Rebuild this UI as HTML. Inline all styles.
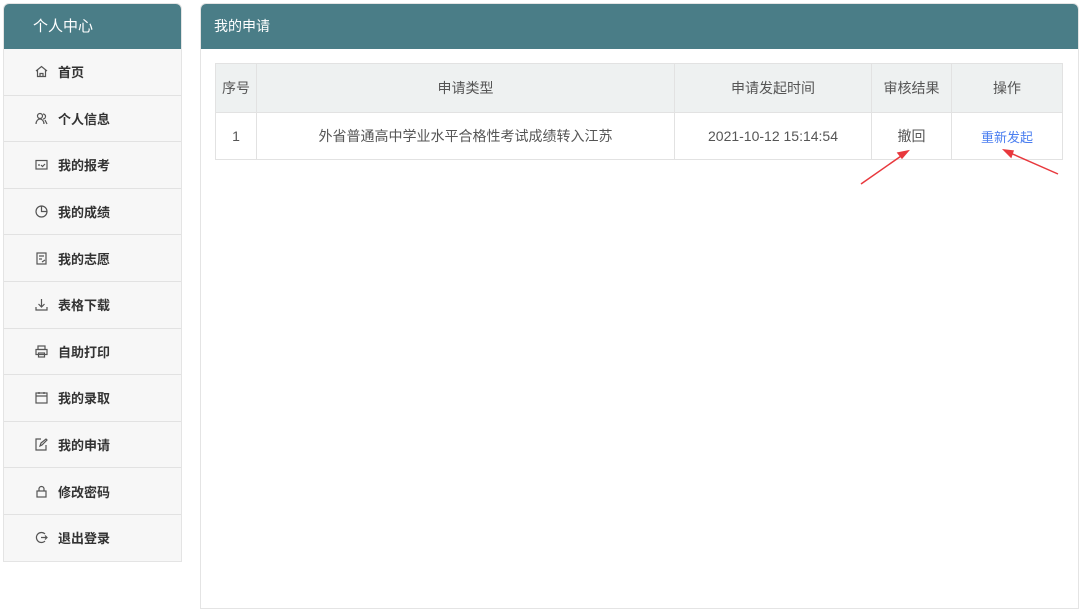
<!DOCTYPE html>
<html><head><meta charset="utf-8"><style>
*{box-sizing:border-box;margin:0;padding:0}
body{width:1080px;height:613px;background:#fff;font-family:"Liberation Sans","Noto Sans CJK SC",sans-serif;position:relative;overflow:hidden}
.side{position:absolute;left:3px;top:3px;width:179px;height:559px;border:1px solid #e4e4e4;border-radius:6px 6px 0 0;background:#f7f7f7;overflow:hidden}
.sh{height:45px;background:#4a7d87;color:#fff;font-size:15px;line-height:45px;padding-left:29px}
.it{height:46.6px;border-bottom:1px solid #e2e2e2;font-size:13px;font-weight:bold;color:#333;display:flex;align-items:center;padding-left:31px}
.it svg{width:13px;height:13px;margin-right:10px;stroke:#555;fill:none;stroke-width:1.2}
.main{position:absolute;left:200px;top:3px;width:879px;height:606px;border:1px solid #e4e4e4;border-radius:6px 6px 0 0;overflow:hidden}
.mh{height:45px;background:#4a7d87;color:#fff;font-size:14px;line-height:45px;padding-left:13px}
table{position:absolute;left:14px;top:59px;border-collapse:collapse;font-size:14px;color:#555}
td,th{border:1px solid #e2e2e2;text-align:center;font-weight:normal}
th{background:#eef1f1;height:49px}
td{height:47px}
a{color:#4a7ef0;font-size:13px;text-decoration:none}
</style></head><body>
<div class="side"><div class="sh">个人中心</div>
<div class="it"><svg viewBox="0 0 13 13"><path d="M1 6L6.5 1.5 12 6M2.5 5v6.5h8V5M5 11.5v-3h3v3"/></svg>首页</div>
<div class="it"><svg viewBox="0 0 13 13"><circle cx="5" cy="4" r="2.5"/><path d="M1 12c0-3 2-5 4-5s4 2 4 5M8 2a2.5 2.5 0 010 5M10 8l2 4"/></svg>个人信息</div>
<div class="it"><svg viewBox="0 0 13 13"><rect x="1" y="2.5" width="11" height="8.5"/><path d="M3 7h2M6 7l1.5 1.5L10 6"/></svg>我的报考</div>
<div class="it"><svg viewBox="0 0 13 13"><circle cx="6.5" cy="6.5" r="5.5"/><path d="M6.5 1v5.5H12"/></svg>我的成绩</div>
<div class="it"><svg viewBox="0 0 13 13"><rect x="2" y="1" width="9" height="11"/><path d="M4 4h5M4 7h3M7 10l3-2"/></svg>我的志愿</div>
<div class="it"><svg viewBox="0 0 13 13"><path d="M6.5 1v8M3.5 6l3 3 3-3M1 9v3h11V9"/></svg>表格下载</div>
<div class="it"><svg viewBox="0 0 13 13"><rect x="3" y="1" width="7" height="3.5"/><rect x="1" y="4.5" width="11" height="5"/><rect x="3.5" y="8" width="6" height="4"/></svg>自助打印</div>
<div class="it"><svg viewBox="0 0 13 13"><rect x="1" y="2" width="11" height="10"/><path d="M1 5h11M4 1v2M9 1v2"/></svg>我的录取</div>
<div class="it"><svg viewBox="0 0 13 13"><path d="M11 7v5H1V1h5M5 8l1-3 5-4 1 1-5 5z"/></svg>我的申请</div>
<div class="it"><svg viewBox="0 0 13 13"><rect x="2" y="6" width="9" height="6"/><path d="M4 6V4a2.5 2.5 0 015 0v2"/></svg>修改密码</div>
<div class="it"><svg viewBox="0 0 13 13"><path d="M10 3a5 5 0 100 7M6 6.5h6M10 4.5l2 2-2 2"/></svg>退出登录</div>
</div>
<div class="main"><div class="mh">我的申请</div>
<table><tr><th style="width:41px">序号</th><th style="width:418px">申请类型</th><th style="width:197px">申请发起时间</th><th style="width:80px">审核结果</th><th style="width:111px">操作</th></tr>
<tr><td>1</td><td>外省普通高中学业水平合格性考试成绩转入江苏</td><td>2021-10-12 15:14:54</td><td>撤回</td><td><a>重新发起</a></td></tr></table>
</div>
<svg style="position:absolute;left:0;top:0" width="1080" height="613"><g stroke="#e8383d" stroke-width="1.5" fill="#e8383d"><line x1="861" y1="184" x2="904" y2="154"/><path d="M908 151l-10 2 4 5z"/><line x1="1058" y1="174" x2="1008" y2="152"/><path d="M1004 150l7 7 2-6z"/></g></svg>
</body></html>
